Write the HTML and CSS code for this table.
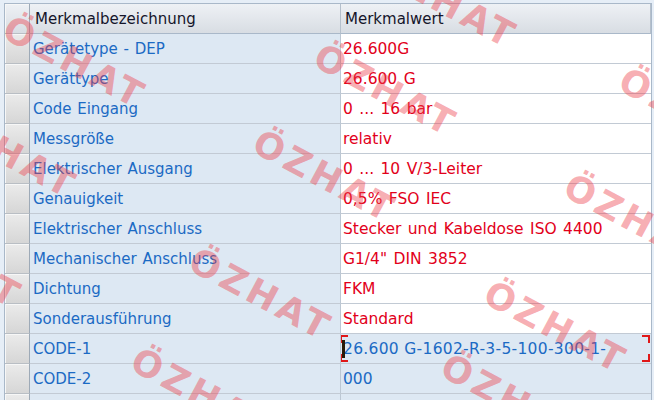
FILE: index.html
```html
<!DOCTYPE html>
<html lang="de">
<head>
<meta charset="utf-8">
<title>Merkmale</title>
<link rel="stylesheet" href="styles.css">
</head>
<body>
<div class="grid">
  <div class="rh corner"></div>
  <div class="hd name-hd">Merkmalbezeichnung</div>
  <div class="hd value-hd">Merkmalwert</div>

  <div class="rh"></div><div class="nm">Gerätetype - DEP</div><div class="val">26.600G</div>
  <div class="rh"></div><div class="nm">Gerättype</div><div class="val">26.600 G</div>
  <div class="rh"></div><div class="nm">Code Eingang</div><div class="val">0 ... 16 bar</div>
  <div class="rh"></div><div class="nm">Messgröße</div><div class="val">relativ</div>
  <div class="rh"></div><div class="nm">Elektrischer Ausgang</div><div class="val">0 ... 10 V/3-Leiter</div>
  <div class="rh"></div><div class="nm">Genauigkeit</div><div class="val">0,5% FSO IEC</div>
  <div class="rh"></div><div class="nm">Elektrischer Anschluss</div><div class="val">Stecker und Kabeldose ISO 4400</div>
  <div class="rh"></div><div class="nm">Mechanischer Anschluss</div><div class="val">G1/4" DIN 3852</div>
  <div class="rh"></div><div class="nm">Dichtung</div><div class="val">FKM</div>
  <div class="rh"></div><div class="nm">Sonderausführung</div><div class="val">Standard</div>
  <div class="rh"></div><div class="nm">CODE-1</div><div class="val code sel"><span class="caret"></span><span class="edit">26.600 G-1602-R-3-5-100-300-1-</span><span class="br tl"></span><span class="br tr"></span><span class="br bl"></span><span class="br brr"></span></div>
  <div class="rh"></div><div class="nm">CODE-2</div><div class="val code">000</div>
  <div class="rh"></div><div class="nm"></div><div class="val code"></div>
</div>

<div class="wm" aria-hidden="true">
  <span style="left:14px;top:10px">ÖZHAT</span>
  <span style="left:325px;top:38px">ÖZHAT</span>
  <span style="left:630px;top:62px">ÖZHAT</span>
  <span style="left:385px;top:-50px">ÖZHAT</span>
  <span style="left:-55px;top:100px">ÖZHAT</span>
  <span style="left:264px;top:124px">ÖZHAT</span>
  <span style="left:575px;top:168px">ÖZHAT</span>
  <span style="left:200px;top:242px">ÖZHAT</span>
  <span style="left:495px;top:275px">ÖZHAT</span>
  <span style="left:-110px;top:210px">ÖZHAT</span>
  <span style="left:142px;top:342px">ÖZHAT</span>
  <span style="left:452px;top:348px">ÖZHAT</span>
</div>
</body>
</html>
```
FILE: styles.css
```css
html, body {
  margin: 0;
  padding: 0;
}
body {
  width: 654px;
  height: 400px;
  overflow: hidden;
  position: relative;
  background: #e6eef7;
  font-family: "DejaVu Sans", sans-serif;
  font-size: 15px;
}
.grid {
  margin: 3px 0 0 4px;
  width: 648px;
  height: 397px;
  overflow: hidden;
  box-sizing: border-box;
  border-top: 1px solid #a9b8c9;
  border-left: 1px solid #a9b8c9;
  border-right: 1px solid #a9b8c9;
  display: grid;
  grid-template-columns: 25px 311px 310px;
  grid-auto-rows: 30px;
}
.grid > div {
  box-sizing: border-box;
  display: flex;
  align-items: center;
  white-space: nowrap;
  overflow: hidden;
  border-bottom: 1px solid #c2cad4;
}
.rh {
  background: linear-gradient(#ebebeb, #d6d6d6);
  border-right: 1px solid #9eaab7;
  box-shadow: inset 1px 1px 0 #f7f7f7;
  border-bottom-color: #b9bec4 !important;
}
.rh.corner {
  background: linear-gradient(#eef1f5, #d8dde3);
}
.hd {
  background: linear-gradient(#eef1f5, #d8dde3);
  color: #15152a;
  border-bottom: 1px solid #a9b8c9 !important;
  border-right: 1px solid #b5c0cc;
}
.name-hd { padding-left: 5px; }
.value-hd { padding-left: 4px; }
.nm {
  background: #dde8f3;
  color: #1b6ac4;
  padding-left: 3px;
  word-spacing: 1px;
  border-right: 1px solid #bcc7d3;
}
.val {
  background: #ffffff;
  color: #e2001a;
  padding-left: 2px;
  font-size: 15.5px;
  word-spacing: 1.5px;
  position: relative;
}
.val.code {
  background: #dde8f3;
  color: #1b6ac4;
}
.edit {
  letter-spacing: 0.3px;
  word-spacing: 0;
}
.caret {
  position: absolute;
  left: 1px;
  top: 6px;
  width: 3px;
  height: 18px;
  background: #2a1a08;
}
.br {
  position: absolute;
  width: 6px;
  height: 6px;
  border: 0 solid #e01818;
}
.br.tl { left: -1px; top: 1px; border-top-width: 2px; border-left-width: 2px; }
.br.tr { right: 1px; top: 1px; border-top-width: 2px; border-right-width: 2px; }
.br.bl { left: -1px; bottom: 1px; border-bottom-width: 2px; border-left-width: 2px; }
.br.brr { right: 1px; bottom: 1px; border-bottom-width: 2px; border-right-width: 2px; }

.wm {
  position: absolute;
  inset: 0;
  overflow: hidden;
  pointer-events: none;
}
.wm span {
  position: absolute;
  transform-origin: left top;
  transform: rotate(28deg);
  font-family: "DejaVu Sans", sans-serif;
  font-weight: bold;
  font-size: 36px;
  line-height: 1;
  letter-spacing: 4px;
  color: rgba(236, 60, 72, 0.42);
}
```
